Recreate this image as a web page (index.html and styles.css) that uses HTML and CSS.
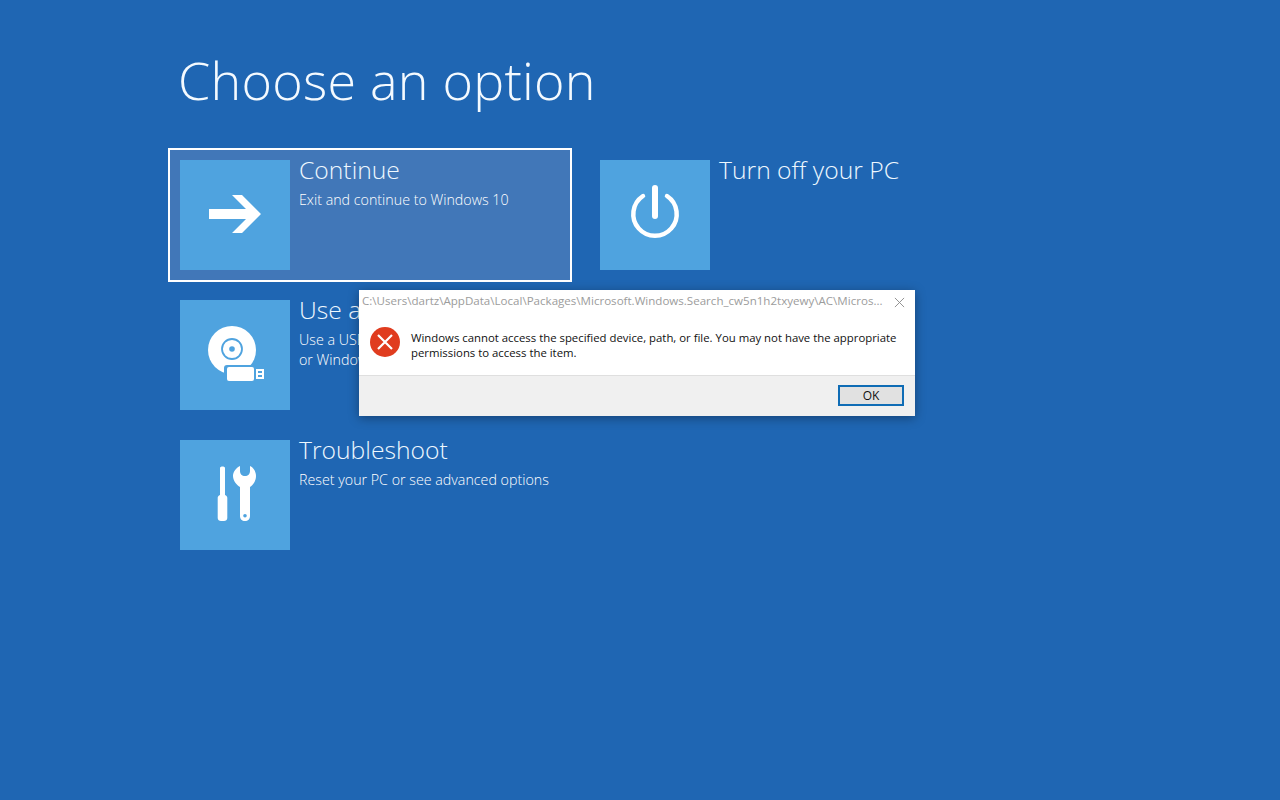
FILE: index.html
```html
<!DOCTYPE html>
<html lang="en">
<head>
<meta charset="utf-8">
<title>Choose an option</title>
<link rel="stylesheet" href="styles.css">
</head>
<body>
<main class="screen">
  <h1 class="heading">Choose an option</h1>
  <div class="options">
    <div class="option option-selected">
      <div class="tile">
        <svg class="icon" viewBox="0 0 110 110"><path fill="#fff" d="M52 35h10l19 19-19 19H52l14-14H29V49h37z"/></svg>
      </div>
      <div class="option-text">
        <div class="option-title">Continue</div>
        <div class="option-desc">Exit and continue to Windows 10</div>
      </div>
    </div>
    <div class="option">
      <div class="tile">
        <svg class="icon" viewBox="0 0 110 110"><path fill="none" stroke="#fff" stroke-width="4.500" stroke-linecap="round" d="M43 36a21.700 21.700 0 1 0 24 0"/><path fill="none" stroke="#fff" stroke-width="6" stroke-linecap="round" d="M55 28v28"/></svg>
      </div>
      <div class="option-text">
        <div class="option-title">Turn off your PC</div>
      </div>
    </div>
    <div class="option">
      <div class="tile">
        <svg class="icon" viewBox="0 0 110 110">
          <circle cx="52" cy="50" r="24" fill="#fff"/>
          <circle cx="52" cy="49" r="10" fill="none" stroke="#4fa3df" stroke-width="1.800"/>
          <circle cx="52" cy="49" r="2.800" fill="#4fa3df"/>
          <rect x="44" y="65" width="32" height="18" rx="3" fill="#4fa3df"/>
          <rect x="47" y="67" width="27" height="14" rx="2" fill="#fff"/>
          <rect x="76" y="69" width="8" height="10" fill="#fff"/>
          <rect x="78" y="71" width="4" height="2" fill="#4fa3df"/>
          <rect x="78" y="75" width="4" height="2" fill="#4fa3df"/>
        </svg>
      </div>
      <div class="option-text">
        <div class="option-title">Use a device</div>
        <div class="option-desc">Use a USB drive, network connection,<br>or Windows recovery DVD</div>
      </div>
    </div>
    <div class="option option-blank" aria-hidden="true"></div>
    <div class="option">
      <div class="tile">
        <svg class="icon" viewBox="0 0 110 110">
          <path fill="#fff" d="M40 27.500c1-1.500 4-1.500 5 0V55c1.500.5 2.300 1.500 2.300 3v20c0 2-1.500 3-3.300 3h-3c-1.800 0-3.300-1-3.300-3V58c0-1.500.8-2.500 2.300-3z"/>
          <path fill="#fff" d="M60 26v5c0 3 2 5 5 5s5-2 5-5v-5c4 2 6 6 6 10 0 5-3 9-6 11v29c0 3-2 5-5 5s-5-2-5-5V47c-3-2-7-6-7-11 0-4 3-8 7-10z"/>
          <circle cx="65" cy="75.700" r="1.800" fill="#4fa3df"/>
        </svg>
      </div>
      <div class="option-text">
        <div class="option-title">Troubleshoot</div>
        <div class="option-desc">Reset your PC or see advanced options</div>
      </div>
    </div>
  </div>
  <div class="dialog" role="alertdialog">
    <div class="dialog-title">
      <span class="dialog-path">C:\Users\dartz\AppData\Local\Packages\Microsoft.Windows.Search_cw5n1h2txyewy\AC\Micros...</span>
      <svg class="dialog-close" viewBox="0 0 12 12"><path fill="none" stroke="#8a8a8a" stroke-width="1" d="M1 1l10 10M11 1L1 11"/></svg>
    </div>
    <div class="dialog-body">
      <svg class="error-icon" viewBox="0 0 30 30"><circle cx="15" cy="15" r="15" fill="#e03c1f"/><path fill="none" stroke="#fff" stroke-width="2.200" d="M8 8l14 14M22 8L8 22"/></svg>
      <p class="dialog-message">Windows cannot access the specified device, path, or file. You may not have the appropriate permissions to access the item.</p>
    </div>
    <div class="dialog-footer">
      <button class="dialog-ok" type="button">OK</button>
    </div>
  </div>
</main>
</body>
</html>
```
FILE: styles.css
```css
* { box-sizing: border-box; }
html, body { margin: 0; height: 100%; }
body { background: #1f66b3; font-family: "Open Sans", "Noto Sans", sans-serif; color: #fff; overflow: hidden; }
.screen { position: relative; width: 1280px; height: 800px; padding: 40px 0 0 168px; }
.heading { margin: 0 0 28px 10px; font-size: 52px; line-height: 80px; font-weight: 300; letter-spacing: .25px; color: #f4faff; }
.options { display: grid; grid-template-columns: 404px 404px; grid-auto-rows: 134px; column-gap: 16px; row-gap: 6px; }
.option { display: flex; gap: 9px; padding: 12px; border: 2px solid transparent; }
.option-blank { visibility: hidden; }
.option-selected { background: #4177b8; border-color: #fff; }
.tile { flex: none; width: 110px; height: 110px; margin: -2px 0 0 -2px; background: #4fa3df; }
.icon { display: block; width: 110px; height: 110px; }
.option-text { margin-top: -10px; min-width: 0; color: #eef8ff; }
.option-title { font-size: 24.700px; line-height: 36px; font-weight: 300; white-space: nowrap; }
.option-desc { margin-top: 2px; font-size: 14.250px; line-height: 20px; font-weight: 300; white-space: nowrap; color: #fff; }
.dialog { position: absolute; left: 359px; top: 290px; width: 556px; height: 126px; background: #fff; color: #000; display: flex; flex-direction: column; box-shadow: 0 2px 10px rgba(0,0,0,.35); }
.dialog-title { flex: none; height: 24px; display: flex; align-items: center; justify-content: space-between; padding: 0 10px 0 3px; }
.dialog-path { font-size: 11.570px; line-height: 22px; height: 24px; color: #9c9c9c; white-space: nowrap; font-family: "Open Sans", sans-serif; }
.dialog-close { flex: none; width: 11px; height: 11px; }
.dialog-body { flex: 1; display: flex; gap: 11px; padding: 13px 12px 0 11px; }
.error-icon { flex: none; width: 30px; height: 30px; }
.dialog-message { margin: 0; padding-top: 3px; font-size: 11.360px; line-height: 15px; color: #111; font-family: "Open Sans", sans-serif; }
.dialog-footer { flex: none; height: 41px; background: #f0f0f0; border-top: 1px solid #dfdfdf; display: flex; align-items: flex-start; justify-content: flex-end; padding: 9px 11px 0 0; }
.dialog-ok { width: 66px; height: 21px; padding: 0; background: #e1e1e1; border: 2px solid #0f6cb5; font-family: "Open Sans", sans-serif; font-size: 12px; color: #111; }
```
